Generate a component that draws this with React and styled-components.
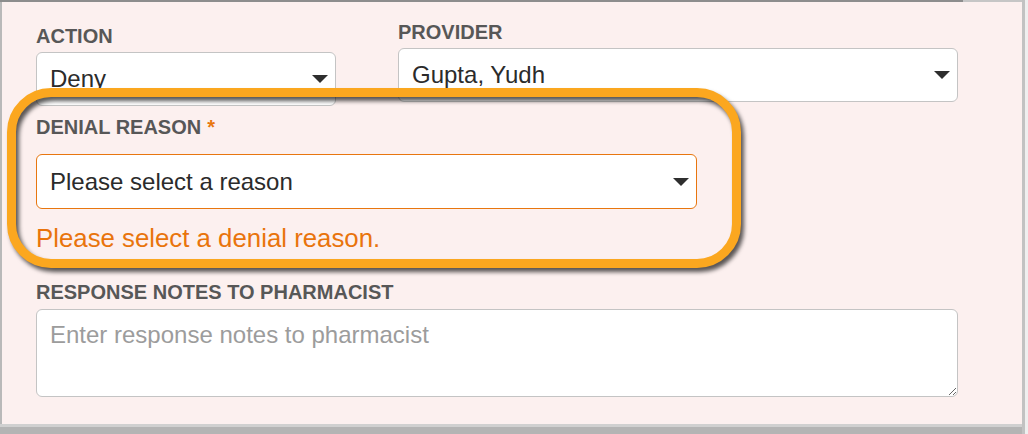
import React from 'react';
import styled, { createGlobalStyle } from 'styled-components';

const GlobalStyle = createGlobalStyle`
  html, body {
    margin: 0;
    padding: 0;
    background: #efefef;
  }

  body {
    font-family: "Liberation Sans", Arial, Helvetica, sans-serif;
  }

  * {
    box-sizing: border-box;
  }
`;

const Frame = styled.div`
  width: 1025px;
  height: 434px;
  display: flex;
  flex-flow: column;
  border-right: 3px solid #c2c2c2;
  background: #fcf0ef;
`;

const TopEdge = styled.div`
  height: 2px;
  flex-shrink: 0;
  background: linear-gradient(to right, #8d8d8d 963px, #c6c6c6 963px);
`;

const BottomEdge = styled.div`
  height: 10px;
  flex-shrink: 0;
  margin-top: auto;
  background: linear-gradient(to bottom, #d0d0d0 3px, #b4b4b4 3px);
`;

const Panel = styled.form`
  border-left: 2px solid #b9b9b9;
  flex: 1;
  padding: 23px 0 0 34px;
  width: 958px;
  display: flex;
  flex-flow: column;
`;

const Row = styled.div`
  display: flex;
  gap: 62px;
`;

const Field = styled.div`
  position: relative;
  display: flex;
  flex-flow: column;
  width: ${({ $width }) => $width}px;
  margin-top: ${({ $lift }) => ($lift ? -$lift : 0)}px;
  margin-bottom: ${({ $below }) => $below || 0}px;
`;

const Label = styled.label`
  font-size: 20px;
  line-height: 22px;
  font-weight: 700;
  color: #575757;
  margin-bottom: ${({ $gap }) => $gap}px;

  span {
    color: #e8770f;
    margin-left: 6px;
  }
`;

const SelectBox = styled.div`
  position: relative;
  height: ${({ $height }) => $height || 54}px;
  background: #fff;
  border: 1.5px solid ${({ $error }) => ($error ? '#e8760f' : '#c4c4c4')};
  border-radius: 6px;
  padding-left: 13px;
  display: flex;
  align-items: center;
  font-size: 24px;
  color: #2b2b2b;

  &::after {
    content: '';
    position: absolute;
    right: 7px;
    top: 50%;
    margin-top: -4px;
    border-left: 8px solid transparent;
    border-right: 8px solid transparent;
    border-top: 8px solid #2e2e2e;
  }
`;

const ErrorText = styled.div`
  font-size: 25.8px;
  line-height: 30px;
  color: #e9740c;
  margin-top: 14px;
`;

const Highlight = styled.div`
  position: absolute;
  left: -29px;
  top: -28px;
  width: 734px;
  height: 180px;
  border: 9px solid #fba71f;
  border-radius: 44px;
  filter: drop-shadow(3px 4px 2px rgba(0, 0, 0, 0.65));
  pointer-events: none;
  z-index: 2;
`;

const Notes = styled.textarea`
  width: 922px;
  height: 88px;
  border: 1.5px solid #c4c4c4;
  border-radius: 6px;
  background: #fff;
  padding: 11px 13px;
  font-family: "Liberation Sans", Arial, Helvetica, sans-serif;
  font-size: 24px;
  color: #2b2b2b;
  resize: both;
  outline: none;

  &::placeholder {
    color: #9c9c9c;
  }
`;

const App = () => {
  return (
    <>
      <GlobalStyle />
      <Frame>
        <TopEdge />
        <Panel>
          <Row>
            <Field $width={300} $below={10}>
              <Label $gap={5}>ACTION</Label>
              <SelectBox>Deny</SelectBox>
            </Field>
            <Field $width={560} $lift={4}>
              <Label $gap={5}>PROVIDER</Label>
              <SelectBox>Gupta, Yudh</SelectBox>
            </Field>
          </Row>
          <Field $width={661} $below={28}>
            <Highlight />
            <Label $gap={16}>
              DENIAL REASON<span>*</span>
            </Label>
            <SelectBox $error $height={55}>
              Please select a reason
            </SelectBox>
            <ErrorText>Please select a denial reason.</ErrorText>
          </Field>
          <Label $gap={6}>RESPONSE NOTES TO PHARMACIST</Label>
          <Notes placeholder="Enter response notes to pharmacist" />
        </Panel>
        <BottomEdge />
      </Frame>
    </>
  );
};

export default App;
